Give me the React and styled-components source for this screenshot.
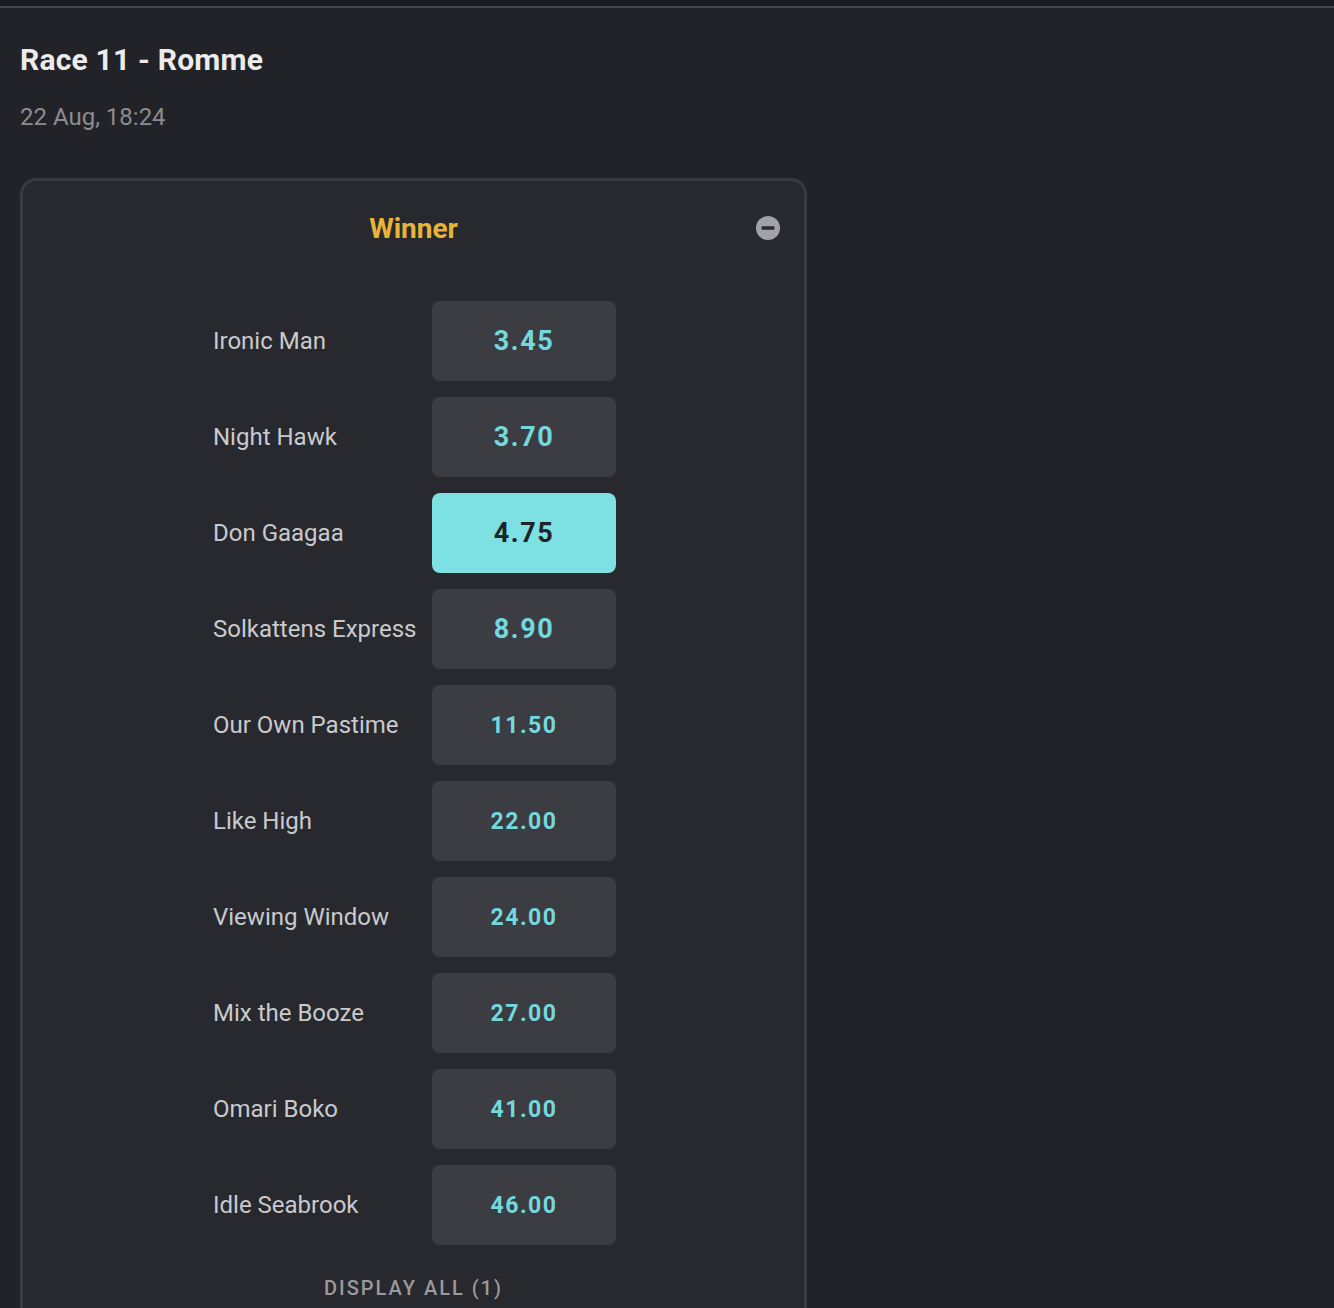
import React from 'react';
import styled, { createGlobalStyle } from 'styled-components';

const GlobalStyle = createGlobalStyle`
  body {
    margin: 0;
    background-color: #222328;
    font-family: Roboto, "Liberation Sans", sans-serif;
    overflow: hidden;
  }
`;

const TopBar = styled.div`
  height: 6px;
  background-color: #1b1c20;
  border-bottom: 2px solid #44444e;
`;
const Page = styled.div`
  padding: 35px 20px 0 20px;
`;
const Title = styled.h1`
  margin: 0;
  font-size: 30px;
  line-height: 34px;
  font-weight: 700;
  letter-spacing: 0.2px;
  color: #ececec;
`;
const Date = styled.div`
  margin-top: 27px;
  font-size: 24px;
  line-height: 26px;
  color: #8c8c90;
`;
const Card = styled.div`
  margin-top: 48px;
  width: 781px;
  border: 3px solid #3a3b40;
  border-radius: 16px;
  background-color: #28292e;
  padding-bottom: 40px;
`;
const CardHeader = styled.div`
  height: 94px;
  display: grid;
  grid-template-columns: 1fr auto 1fr;
  align-items: center;
  padding: 0 24px;
`;
const MarketName = styled.div`
  grid-column: 2;
  font-size: 28px;
  font-weight: 700;
  color: #e8b437;
`;
const Collapse = styled.button`
  grid-column: 3;
  justify-self: end;
  width: 24px;
  height: 24px;
  padding: 0;
  border: 0;
  background: transparent;
  cursor: pointer;
  display: flex;
`;
const List = styled.div`
  margin-top: 26px;
  padding-left: 2px;
  display: flex;
  flex-direction: column;
  align-items: center;
  gap: 16px;
`;
const Row = styled.div`
  display: flex;
  align-items: center;
`;
const Runner = styled.div`
  width: 219px;
  font-size: 24px;
  color: #c9cacd;
  white-space: nowrap;
`;
const Odds = styled.button`
  width: 184px;
  height: 80px;
  border: 0;
  border-radius: 8px;
  background-color: ${p => (p.$selected ? '#7de0e2' : '#3c3d43')};
  color: ${p => (p.$selected ? '#1c2628' : '#74d9dd')};
  font-family: Roboto, "Liberation Sans", sans-serif;
  font-size: ${p => (p.$long ? '23px' : '27px')};
  font-weight: 700;
  letter-spacing: 1.5px;
  cursor: pointer;
`;
const DisplayAll = styled.div`
  margin-top: 31px;
  text-align: center;
  font-size: 20px;
  line-height: 24px;
  font-weight: 500;
  letter-spacing: 2px;
  color: #9a9a9e;
`;

const runners = [
  ['Ironic Man', '3.45'],
  ['Night Hawk', '3.70'],
  ['Don Gaagaa', '4.75', true],
  ['Solkattens Express', '8.90'],
  ['Our Own Pastime', '11.50'],
  ['Like High', '22.00'],
  ['Viewing Window', '24.00'],
  ['Mix the Booze', '27.00'],
  ['Omari Boko', '41.00'],
  ['Idle Seabrook', '46.00'],
];

const MinusIcon = () => (
  <svg width="24" height="24" viewBox="0 0 24 24">
    <circle cx="12" cy="12" r="12" fill="#a2a2a6" />
    <rect x="5.5" y="10.2" width="13" height="3.6" rx="0.8" fill="#2a2b30" />
  </svg>
);

const App = () => {
  return (
    <>
      <GlobalStyle />
      <TopBar />
      <Page>
        <Title>Race 11 - Romme</Title>
        <Date>22 Aug, 18:24</Date>
        <Card>
          <CardHeader>
            <MarketName>Winner</MarketName>
            <Collapse><MinusIcon /></Collapse>
          </CardHeader>
          <List>
            {runners.map(([name, price, selected]) => (
              <Row key={name}>
                <Runner>{name}</Runner>
                <Odds $selected={selected} $long={price.length > 4}>{price}</Odds>
              </Row>
            ))}
          </List>
          <DisplayAll>DISPLAY ALL (1)</DisplayAll>
        </Card>
      </Page>
    </>
  );
};

export default App;
